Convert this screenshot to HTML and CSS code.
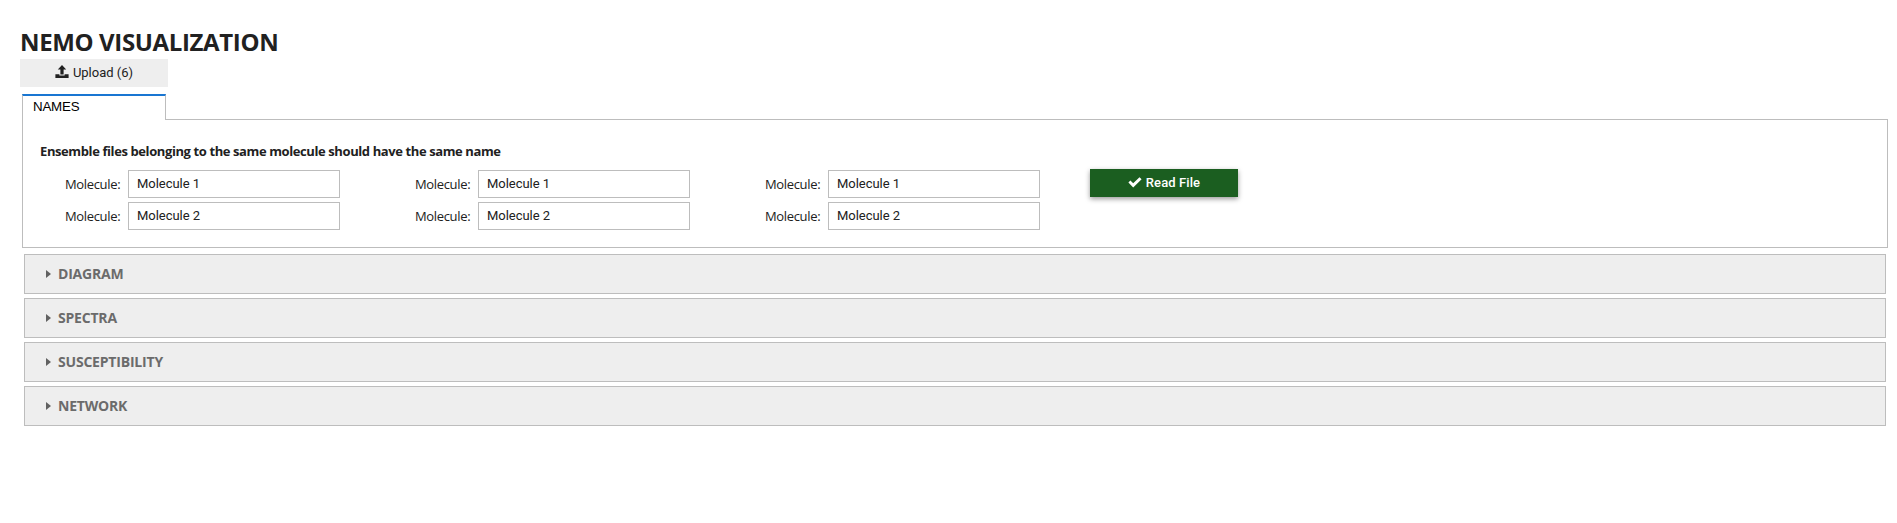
FILE: index.html
```html
<!DOCTYPE html>
<html lang="en">
<head>
<meta charset="utf-8">
<title>NEMO Visualization</title>
<link rel="stylesheet" href="styles.css">
</head>
<body>
<main class="page">
  <h1 class="title">NEMO VISUALIZATION</h1>
  <button class="upload" type="button">
    <svg class="upload-icon" viewBox="0 0 14 14"><path d="M7 0 11.2 4.6H8.6V9.4H5.4V4.6H2.8ZM.4 9.2H4.4V10.6H9.6V9.2H13.6V13H.4Z"/></svg>
    <span>Upload (6)</span>
  </button>
  <section class="tabs">
    <div class="tab-row"><div class="tab">NAMES</div><div class="tab-line"></div></div>
    <div class="panel">
      <p class="hint">Ensemble files belonging to the same molecule should have the same name</p>
      <div class="form">
        <div class="column">
          <label class="field"><span class="label">Molecule:</span><input value="Molecule 1"></label>
          <label class="field"><span class="label">Molecule:</span><input value="Molecule 2"></label>
        </div>
        <div class="column">
          <label class="field"><span class="label">Molecule:</span><input value="Molecule 1"></label>
          <label class="field"><span class="label">Molecule:</span><input value="Molecule 2"></label>
        </div>
        <div class="column">
          <label class="field"><span class="label">Molecule:</span><input value="Molecule 1"></label>
          <label class="field"><span class="label">Molecule:</span><input value="Molecule 2"></label>
        </div>
        <button class="read" type="button">
          <svg class="check-icon" viewBox="0 0 14 11"><path d="M.4 5.6 2.4 3.6 5.2 6.2 11.5.3 13.6 2.3 5.2 10.6Z"/></svg>
          <span>Read File</span>
        </button>
      </div>
    </div>
  </section>
  <section class="accordion">
    <div class="item"><svg class="caret" viewBox="0 0 5 8"><path d="M0 0 5 4 0 8Z"/></svg>DIAGRAM</div>
    <div class="item"><svg class="caret" viewBox="0 0 5 8"><path d="M0 0 5 4 0 8Z"/></svg>SPECTRA</div>
    <div class="item"><svg class="caret" viewBox="0 0 5 8"><path d="M0 0 5 4 0 8Z"/></svg>SUSCEPTIBILITY</div>
    <div class="item"><svg class="caret" viewBox="0 0 5 8"><path d="M0 0 5 4 0 8Z"/></svg>NETWORK</div>
  </section>
</main>
</body>
</html>
```

FILE: styles.css
```css
* { box-sizing: border-box; }
body { margin: 0; background: #fff; color: #212121; font-family: "Open Sans", sans-serif; }
.page { padding: 25px 9px 0 20px; }
.title { margin: 0; height: 34px; line-height: 34px; font-size: 24px; font-weight: 700; letter-spacing: -.36px; white-space: nowrap; }
.upload, .read {
  display: flex; align-items: center; justify-content: center;
  width: 148px; height: 28px; border: 0; padding: 0 0 2px; gap: 4px;
}
.upload { background: #eee; color: #212121; font: 400 13px Roboto, sans-serif; }
.upload-icon { width: 14px; height: 14px; fill: #212121; }
.tabs { margin: 7px 0 0 2px; }
.tab-row { display: flex; height: 26px; }
.tab {
  width: 144px; padding-left: 10px; line-height: 22px; letter-spacing: -.2px;
  border-top: 2px solid #1976d2; border-left: 1px solid #bdbdbd; border-right: 1px solid #bdbdbd;
  font-family: "Liberation Sans", Arial, sans-serif; font-size: 13.33px; color: #000;
}
.tab-line { flex: 1; border-bottom: 1px solid #bdbdbd; }
.panel { height: 128px; border: 1px solid #bdbdbd; border-top: 0; padding: 21px 0 0 17px; }
.hint { margin: 0; height: 29px; line-height: 20px; font-size: 13px; font-weight: 700; letter-spacing: -.4px; white-space: nowrap; }
.form { display: flex; align-items: flex-start; }
.column { display: grid; gap: 4px; width: 350px; padding: 0 50px 0 25px; }
.field { display: flex; align-items: center; justify-content: space-between; }
.label { padding-bottom: 1px; font-size: 13px; letter-spacing: -.34px; }
.field input {
  width: 212px; height: 28px; margin: 0; padding: 0 8px 2px; border: 1px solid #bdbdbd;
  background: #fff; color: #212121; font: 400 13px Roboto, sans-serif; letter-spacing: -.03px;
}
.read {
  margin-top: -1px; background: #1b5e20; color: #fff; font: 500 13px Roboto, sans-serif; letter-spacing: .1px;
  box-shadow: 0 2px 5px rgba(0, 0, 0, .4);
}
.check-icon { width: 14px; height: 11px; fill: #fff; }
.accordion { display: grid; gap: 4px; margin: 6px 2px 0 4px; }
.item {
  display: flex; align-items: center; gap: 7px; height: 40px; padding: 0 0 2px 21px;
  border: 1px solid #bdbdbd; background: #eee; color: #6b6b6b; font-size: 14px; font-weight: 700; letter-spacing: -.2px;
}
.caret { width: 5px; height: 8px; margin-top: 1px; fill: #616161; }
```
